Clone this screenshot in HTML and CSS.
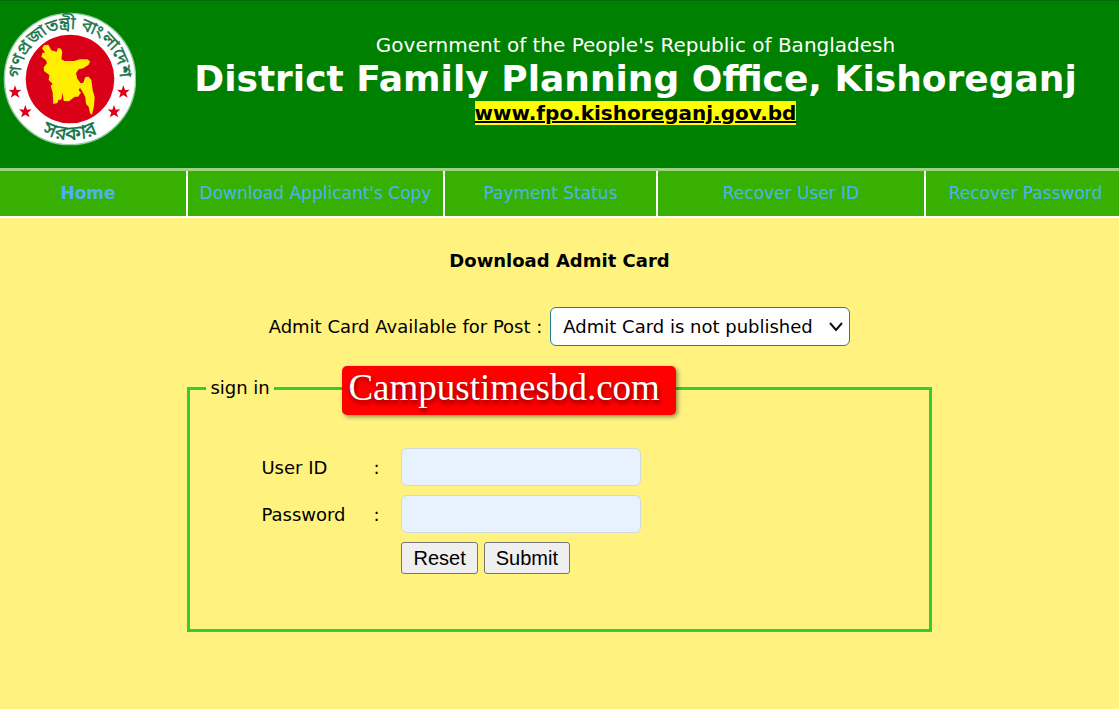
FILE: index.html
```html
<!DOCTYPE html>
<html lang="en">

<head>
    <meta charset="UTF-8">
    <meta name="viewport" content="width=device-width, initial-scale=1.0">
    <title>District Family Planning Office, Kishoreganj</title>
    <link rel="stylesheet" href="styles.css">
</head>

<body>

    <header class="header">
        <svg class="logo" viewBox="0 36 408 408" role="img" aria-label="Government seal">
            <defs>
                <path id="arcTop" d="M71 290 A149 149 0 1 1 349 290" />
                <path id="arcBottom" d="M27 237 A183 183 0 0 0 393 237" />
                <path id="star" d="M0 -20 L5 -6 L19 -7 L8 3 L13 17 L0 9 L-13 17 L-8 3 L-19 -7 L-5 -6 Z" />
            </defs>
            <circle cx="210" cy="237" r="197" fill="#fff" stroke="#8fcf9f" stroke-width="4" />
            <circle cx="210" cy="237" r="133" fill="#da0017" />
            <path fill="#ffee00" d="M145 134 L154 151 L170 155 L174 144 L183 146 L187 156 L184 178 L194 183 L222 183 L240 178 L262 178 L270 184 L266 194 L250 205 L236 208 L228 220 L232 236 L242 250 L250 248 L256 231 L266 230 L274 240 L278 270 L284 292 L282 318 L276 344 L270 340 L266 320 L258 312 L256 292 L250 280 L240 263 L236 271 L243 278 L234 290 L224 290 L207 304 L191 303 L188 278 L184 299 L176 299 L172 309 L160 312 L158 278 L152 257 L158 252 L146 240 L148 225 L132 213 L131 202 L141 190 L138 181 L124 170 L127 160 L135 157 L126 145 L132 136 Z" />
            <g fill="#da0017">
                <use href="#star" x="45" y="276" />
                <use href="#star" x="76" y="335" />
                <use href="#star" x="342" y="335" />
                <use href="#star" x="370" y="276" />
            </g>
            <g class="logo-text">
                <text><textPath href="#arcTop" startOffset="50%">গণপ্রজাতন্ত্রী বাংলাদেশ</textPath></text>
                <text class="logo-text-bottom"><textPath href="#arcBottom" startOffset="50%">সরকার</textPath></text>
            </g>
        </svg>
        <div class="header-text">
            <p class="govt">Government of the People's Republic of Bangladesh</p>
            <h1>District Family Planning Office, Kishoreganj</h1>
            <a class="site-link" href="#">www.fpo.kishoreganj.gov.bd</a>
        </div>
    </header>

    <div class="nav-wrap">
        <nav class="nav">
            <a class="active" href="#">Home</a>
            <a href="#">Download Applicant's Copy</a>
            <a href="#">Payment Status</a>
            <a href="#">Recover User ID</a>
            <a href="#">Recover Password</a>
        </nav>
    </div>

    <main class="content">
        <h2>Download Admit Card</h2>

        <div class="post-row">
            <label for="post">Admit Card Available for Post :</label>
            <div class="select-wrap">
                <select id="post">
                    <option>Admit Card is not published</option>
                </select>
                <svg class="arrow" viewBox="0 0 14 10" aria-hidden="true">
                    <path d="M1 1 L7 8 L13 1" />
                </svg>
            </div>
        </div>

        <form class="login">
            <fieldset>
                <legend>sign in</legend>
                <div class="fields">
                    <label for="userId">User ID</label>
                    <span>:</span>
                    <input type="text" id="userId">

                    <label for="password">Password</label>
                    <span>:</span>
                    <input type="password" id="password">

                    <div class="buttons">
                        <button type="reset">Reset</button>
                        <button type="submit">Submit</button>
                    </div>
                </div>
            </fieldset>
            <div class="watermark">Campustimesbd.com</div>
        </form>
    </main>

</body>

</html>
```
FILE: styles.css
```css
* {
    box-sizing: border-box;
}

body {
    margin: 0;
    background: #fff27f;
    color: #000;
    font-family: Verdana, "DejaVu Sans", sans-serif;
    font-size: 18px;
}

.header {
    display: flex;
    align-items: flex-start;
    gap: 16px;
    padding: 11px 0 20px;
    background: #008000;
    border-top: 1px solid #006b00;
}

.logo {
    width: 136px;
    flex-shrink: 0;
}

.logo-text {
    fill: #16744a;
    stroke: #16744a;
    stroke-width: 1;
    font-family: "Noto Sans Bengali", "Noto Sans", sans-serif;
    font-size: 52px;
    text-anchor: middle;
}

.logo-text-bottom {
    font-size: 60px;
}

.header-text {
    flex: 1;
    padding-top: 21px;
    text-align: center;
    color: #fff;
}

.govt {
    margin: 0;
    font-size: 20px;
    line-height: 24px;
}

h1 {
    margin: 0;
    font-size: 36px;
    line-height: 44px;
}

.site-link {
    display: inline-block;
    background: #ff0;
    color: #000;
    font-size: 20px;
    font-weight: bold;
    line-height: 24px;
}

.nav-wrap {
    overflow: hidden;
    border-top: 3px solid #99d580;
    border-bottom: 2px solid #fff;
    background: #38b003;
}

/* menu runs a little past both edges of the window */
.nav {
    display: grid;
    grid-template-columns: 198fr 257fr 213fr 268fr 199fr;
    margin: 0 -6px 0 -10px;
}

.nav a {
    padding: 12px 0;
    border-right: 2px solid #fff;
    color: #4bb4f0;
    font-size: 17px;
    line-height: 21px;
    text-align: center;
    text-decoration: none;
}

.nav a:last-child {
    border-right: none;
}

.nav .active {
    font-weight: bold;
}

.content {
    padding: 31px 0 76px;
}

h2 {
    margin: 0;
    font-size: 18px;
    line-height: 24px;
    text-align: center;
}

.post-row {
    display: flex;
    justify-content: center;
    align-items: center;
    gap: 8px;
    margin-top: 34px;
}

.select-wrap {
    position: relative;
}

select {
    width: 300px;
    height: 39px;
    padding: 0 12px;
    appearance: none;
    border: 1px solid #1f7f9c;
    border-radius: 6px;
    background: #fff;
    color: #000;
    font: inherit;
}

.arrow {
    position: absolute;
    top: 15px;
    right: 7px;
    width: 14px;
    height: 10px;
    fill: none;
    stroke: #111;
    stroke-width: 2;
    pointer-events: none;
}

.login {
    position: relative;
    width: 66.5%;
    margin: 31px auto 0;
}

fieldset {
    margin: 0;
    padding: 49px 72px 55px 16px;
    border: 3px solid #32cd32;
}

legend {
    padding: 0 4px;
    line-height: 22px;
}

.fields {
    display: grid;
    grid-template-columns: 112px 28px 240px;
    row-gap: 9px;
    align-items: center;
    padding-left: 55px;
}

input {
    width: 100%;
    height: 38px;
    padding: 6px 12px;
    border: 1px solid #ced9e0;
    border-radius: 6px;
    background: #e8f2fe;
    font: inherit;
}

.buttons {
    display: flex;
    grid-column: 3;
    gap: 6px;
}

button {
    height: 32px;
    padding: 0 11px;
    border: 1px solid #767676;
    border-radius: 3px;
    background: #efefef;
    color: #000;
    font-family: Arial, "Liberation Sans", sans-serif;
    font-size: 20px;
}

/* site name sits over the top border of the fieldset */
.watermark {
    position: absolute;
    top: -11px;
    left: 155px;
    padding: 0 16px 6px 6px;
    border-radius: 5px;
    background: #f00;
    box-shadow: 2px 2px 4px rgba(0, 0, 0, 0.4);
    color: #fff;
    font-family: "Times New Roman", "Liberation Serif", serif;
    font-size: 37px;
    line-height: 43px;
    text-shadow: 1px 3px 4px rgba(0, 0, 0, 0.5);
}
```
